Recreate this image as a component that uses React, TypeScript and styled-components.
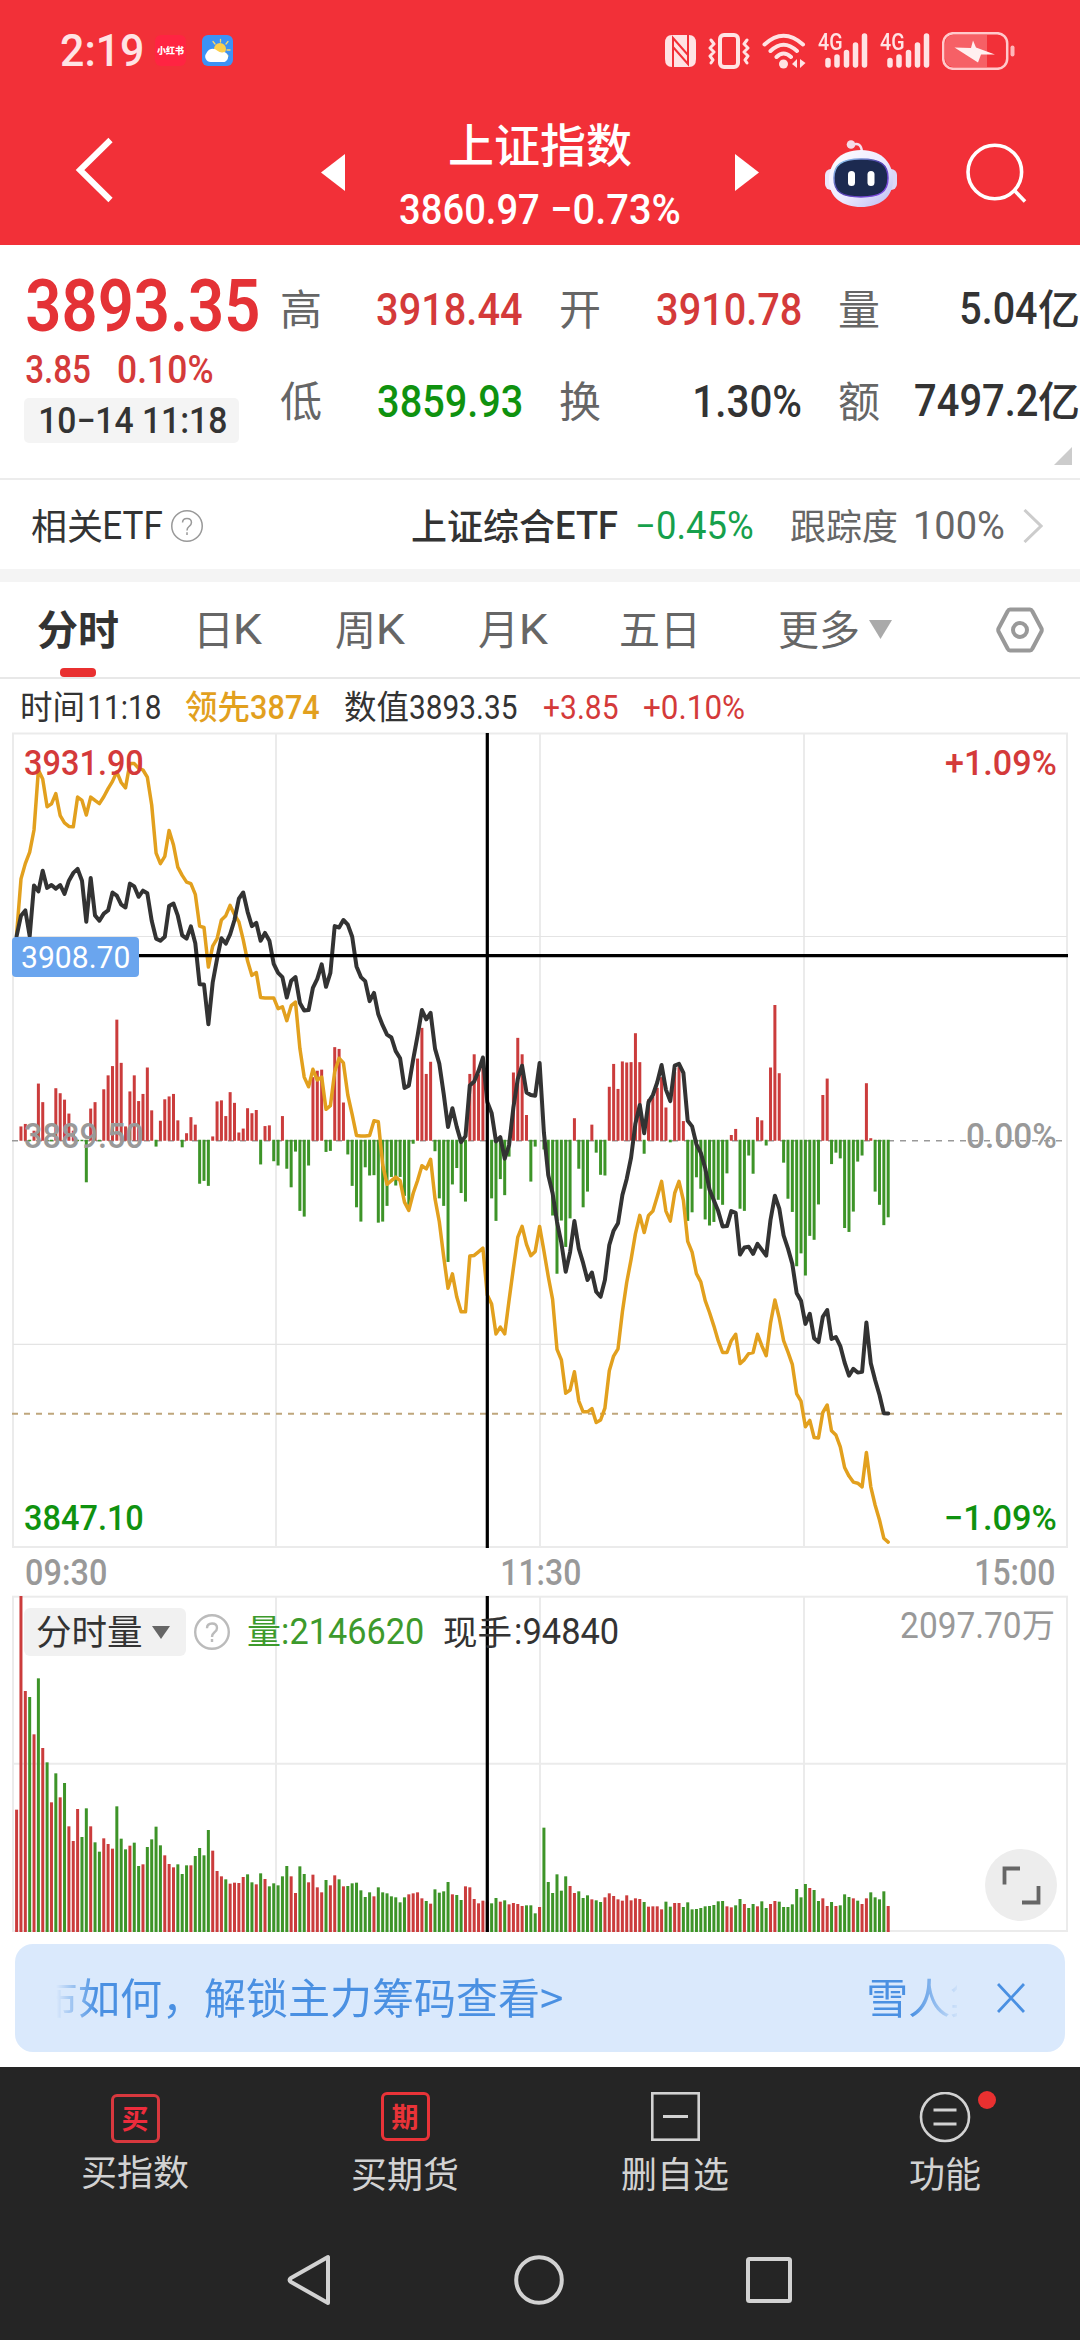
import React from "react";
import styled, { createGlobalStyle } from "styled-components";

const RED = "#e43236";
const GREEN = "#0f920f";
const INK = "#333333";
const GREY = "#999999";
const PALE = "#d2d2d2";
const ORANGE = "#e2a01e";

const GlobalStyle = createGlobalStyle`
  * { box-sizing: border-box; }
  body { margin: 0; background: #fff; font-family: "Noto Sans CJK SC", "Noto Sans", sans-serif; }
  svg { display: block; flex: none; }
`;

/* ---------- text primitives ---------- */

const FigureBox = styled.span<{ $w: number; $size: number; $ml?: number }>`
  display: block;
  flex: none;
  width: ${(p) => p.$w}px;
  height: ${(p) => p.$size}px;
  margin-left: ${(p) => p.$ml ?? 0}px;
`;

const FigureText = styled.span<{ $size: number; $weight: number; $color: string }>`
  display: inline-block;
  vertical-align: top;
  transform-origin: 0 50%;
  white-space: nowrap;
  font-family: Roboto, sans-serif;
  font-size: ${(p) => p.$size}px;
  font-weight: ${(p) => p.$weight};
  line-height: ${(p) => p.$size}px;
  color: ${(p) => p.$color};
`;

const measurer = document.createElement("canvas").getContext("2d")!;

type FigureProps = { t: string; w: number; size: number; weight?: number; color?: string; ml?: number };

/** Latin text and digits condensed so that their ink is exactly `w` wide. */
function Figure({ t, w, size, weight = 500, color = INK, ml }: FigureProps) {
  measurer.font = `${weight} ${size}px Roboto`;
  const m = measurer.measureText(t);
  const k = w / (m.actualBoundingBoxLeft + m.actualBoundingBoxRight);
  return (
    <FigureBox $w={w} $size={size} $ml={ml}>
      <FigureText
        $size={size}
        $weight={weight}
        $color={color}
        style={{ transform: `translateX(${m.actualBoundingBoxLeft * k}px) scaleX(${k})` }}
      >
        {t}
      </FigureText>
    </FigureBox>
  );
}

const Han = styled.span<{ $size: number; $color?: string; $weight?: number; $ml?: number }>`
  display: block;
  flex: none;
  margin-left: ${(p) => p.$ml ?? 0}px;
  padding-bottom: 0.11em;
  font-family: "Noto Sans CJK SC", sans-serif;
  font-size: ${(p) => p.$size}px;
  font-weight: ${(p) => p.$weight ?? 400};
  line-height: 1;
  white-space: nowrap;
  color: ${(p) => p.$color ?? INK};
`;

const Line = styled.div<{ $h?: number; $pl?: number; $pt?: number }>`
  display: flex;
  align-items: center;
  height: ${(p) => (p.$h ? `${p.$h}px` : "auto")};
  padding-left: ${(p) => p.$pl ?? 0}px;
  padding-top: ${(p) => p.$pt ?? 0}px;
`;

/* ---------- header ---------- */

const Screen = styled.div`
  width: 1080px;
  height: 2340px;
  overflow: hidden;
  display: flex;
  flex-direction: column;
  background: #fff;
`;

const Header = styled.header`
  height: 245px;
  background: #f23038;
`;

const StatusBar = styled.div`
  display: flex;
  align-items: center;
  height: 101px;
  padding: 0 65px 0 61px;
`;

const AppIcon = styled.div<{ $ml: number; $bg: string }>`
  display: flex;
  align-items: center;
  justify-content: center;
  width: 31px;
  height: 31px;
  margin-left: ${(p) => p.$ml}px;
  border-radius: 6px;
  background: ${(p) => p.$bg};
  color: #fff;
  font-size: 9px;
  font-weight: 900;
  line-height: 1;
  white-space: nowrap;
`;

const Spacer = styled.div`
  flex: 1;
`;

const StatusIcons = styled.div`
  display: flex;
  align-items: center;
  gap: 12px;
`;

const NavBar = styled.div`
  display: grid;
  grid-template-columns: 321px 438px 66px 72px 1fr;
  align-items: center;
  height: 144px;
`;

const TitleGroup = styled.div`
  display: flex;
  align-items: center;
  justify-content: space-between;
`;

const TitleStack = styled.div`
  display: flex;
  flex-direction: column;
  align-items: center;
  gap: 18px;
  padding-top: 4px;
`;

const SIGNAL = "#ffe3e4";

const NfcIcon = () => (
  <svg width="31" height="32" viewBox="0 0 31 32">
    <path d="M7 0H24Q31 0 31 8V24Q31 32 24 32H7Q0 32 0 24V8Q0 0 7 0Z" fill={SIGNAL} />
    <path d="M8 32V3L23 20V8M23 0V29L8 12V25" stroke="#f23038" strokeWidth="2" fill="none" />
  </svg>
);

const VibrateIcon = () => (
  <svg width="42" height="36" viewBox="0 0 42 36" fill="none" stroke={SIGNAL} strokeLinecap="round" strokeLinejoin="round">
    <rect x="12" y="2" width="18" height="32" rx="4" strokeWidth="4" />
    <path d="M3 7L6 11L2 15L6 19L2 23L5 27L3 30M39 7L36 11L40 15L36 19L40 23L37 27L39 30" strokeWidth="3" />
  </svg>
);

const WifiIcon = () => (
  <svg width="44" height="36" viewBox="0 0 44 36" fill="none" stroke={SIGNAL} strokeWidth="4" strokeLinecap="round">
    <path d="M2.500 11.500Q21.500 -6 41 11.500M8.500 18Q21.500 5.500 35 18M14.500 24Q21.500 17 29 24" />
    <circle cx="21.500" cy="31" r="4.500" fill={SIGNAL} stroke="none" />
    <path d="M35 26V35L30 31ZM38 26V35L43.500 30Z" fill={SIGNAL} stroke="none" />
  </svg>
);

const SignalBox = styled.div`
  position: relative;
  width: 50px;
  height: 35px;
`;

const SignalTag = styled.div`
  position: absolute;
  left: 0;
  top: -2px;
`;

const Signal = () => (
  <SignalBox>
    <svg width="50" height="35" viewBox="0 0 50 35" stroke={SIGNAL} strokeWidth="5.500" strokeLinecap="round">
      <path d="M10 27.500V32M19 24V32M28.500 19.500V32M37.500 12V32M46.500 3V32" />
    </svg>
    <SignalTag>
      <Figure t="4G" w={24} size={23} color={SIGNAL} />
    </SignalTag>
  </SignalBox>
);

const BatteryIcon = () => (
  <svg width="73" height="38" viewBox="0 0 73 38">
    <path d="M10 3H45V35H10Q3 33 3 26V12Q3 4 10 3Z" fill="#f66066" />
    <rect x="1.200" y="1.200" width="64" height="35.600" rx="10" fill="none" stroke="#ffc9cb" strokeWidth="2.500" />
    <rect x="68.500" y="13.500" width="4" height="11" rx="2" fill="#ffb6b9" />
    <path d="M31 8.500L34 15.500L53 22.500L39 22.500L36 30.500L12.500 15.500L29 16Z" fill="#fff0f0" />
  </svg>
);

const WeatherIcon = () => (
  <svg width="31" height="31" viewBox="0 0 31 31">
    <path d="M18.500 4.500V7M11 6.500L13 9M26 6.500L24 9M28 15H25M26 21L24 19" stroke="#f8d868" strokeWidth="1.300" strokeLinecap="round" />
    <circle cx="18" cy="14" r="6" fill="#fcd04e" />
    <path d="M9 27A5.500 5.500 0 0 1 4.500 18A6.500 6.500 0 0 1 15 15.500Q19 18.500 22 17A5 5 0 0 1 20 27Z" fill="#fff" />
  </svg>
);

const BackButton = styled.div`
  padding: 0 0 6px 74px;
`;

const BackIcon = () => (
  <BackButton>
    <svg width="40" height="68" viewBox="0 0 40 68">
      <path d="M36.500 4L6 34L36.500 64" fill="none" stroke="#fff" strokeWidth="6" />
    </svg>
  </BackButton>
);

const Arrow = ({ flip }: { flip?: boolean }) => (
  <svg width="24" height="37" viewBox="0 0 24 37">
    <path d={flip ? "M0 0L24 18.500L0 37Z" : "M24 0L0 18.500L24 37Z"} fill="#fff" />
  </svg>
);

const RobotIcon = () => (
  <svg width="72" height="67" viewBox="0 0 72 67">
    <defs>
      <linearGradient id="shell" x1="0" y1="0" x2="1" y2="1">
        <stop offset="0" stopColor="#ffffff" />
        <stop offset="0.550" stopColor="#ece9ff" />
        <stop offset="1" stopColor="#b9baf2" />
      </linearGradient>
      <linearGradient id="rim" x1="0" y1="0" x2="1" y2="1">
        <stop offset="0" stopColor="#9fe6ff" />
        <stop offset="0.450" stopColor="#4d3fa8" />
        <stop offset="1" stopColor="#8a4cf0" />
      </linearGradient>
    </defs>
    <path d="M27 5Q36 1 37 12" fill="none" stroke="#f6dfee" strokeWidth="2.500" />
    <circle cx="26" cy="4.500" r="4.300" fill="#f5dbe8" />
    <rect x="0" y="29" width="13" height="21" rx="6" fill="#ece6fa" />
    <rect x="59" y="29" width="13" height="21" rx="6" fill="#dcd6f8" />
    <path d="M36 10C58 10 68 24 68 40C68 58 54 67 36 67C18 67 4 58 4 40C4 24 14 10 36 10Z" fill="url(#shell)" />
    <path d="M36 19C56 19 63 25 63 38C63 52 55 57 36 57C17 57 9 52 9 38C9 25 16 19 36 19Z" fill="#1c2a50" stroke="url(#rim)" strokeWidth="1.500" />
    <rect x="23" y="31" width="7" height="15" rx="3.500" fill="#fff" />
    <rect x="42.500" y="31" width="7" height="15" rx="3.500" fill="#fff" />
  </svg>
);

const SearchButton = styled.div`
  padding-left: 68px;
`;

const SearchIcon = () => (
  <SearchButton>
    <svg width="62" height="62" viewBox="0 0 62 62" fill="none" stroke="#fff" strokeWidth="3.600">
      <circle cx="29.800" cy="30" r="26.800" />
      <path d="M48.500 47.500L60 59.500" />
    </svg>
  </SearchButton>
);

/* ---------- quote ---------- */

const Quote = styled.section`
  position: relative;
  display: flex;
  height: 235px;
  border-bottom: 2px solid #ececec;
`;

const PriceColumn = styled.div`
  width: 281px;
  padding: 24px 0 0 24px;
`;

const DateBadge = styled.div`
  display: flex;
  align-items: center;
  width: 215px;
  height: 45px;
  margin-top: 5px;
  padding-left: 16px;
  border-radius: 5px;
  background: #f4f4f4;
`;

const StatGrid = styled.div`
  display: grid;
  grid-template-columns: repeat(3, 242px);
  grid-template-rows: 92px 92px;
  column-gap: 37px;
  padding-top: 18px;
`;

const Stat = styled.div`
  display: flex;
  align-items: center;
  justify-content: space-between;
`;

const CornerMark = styled.div`
  position: absolute;
  right: 8px;
  top: 202px;
  border-left: 18px solid transparent;
  border-bottom: 18px solid #cccccc;
`;

const EtfRow = styled.section`
  display: flex;
  align-items: center;
  height: 89px;
  padding: 3px 37px 0 31px;
`;

const HelpIcon = styled.svg<{ $ml: number }>`
  margin-left: ${(p) => p.$ml}px;
`;

const Help = ({ r, stroke, color, ml }: { r: number; stroke: number; color: string; ml: number }) => (
  <HelpIcon $ml={ml} width={2 * r} height={2 * r} viewBox="0 0 36 36" fill="none" stroke={color} strokeWidth={stroke}>
    <circle cx="18" cy="18" r={18 - stroke / 2} />
    <path d="M13 14.200Q13 9.500 18 9.500T23 14Q23 16.500 20.500 18.300Q18 20.300 18 23M18 25V28" />
  </HelpIcon>
);

const More = styled.svg`
  margin-left: 19px;
`;

const Caret = styled.svg`
  margin-left: 9px;
`;

const Band = styled.div`
  height: 13px;
  background: #f4f4f4;
`;

/* ---------- tabs ---------- */

const Tabs = styled.nav`
  display: grid;
  grid-template-columns: 156px 142px 143px 141px 159px 218px 1fr;
  height: 97px;
  padding-left: 37px;
  border-bottom: 2px solid #e8e8e8;
`;

const Tab = styled.div`
  position: relative;
  display: flex;
  align-items: center;
`;

const Underline = styled.div`
  position: absolute;
  left: 23px;
  bottom: 0;
  width: 36px;
  height: 9px;
  border-radius: 4px;
  background: #e93030;
`;

const InfoRow = styled.div`
  display: flex;
  align-items: center;
  height: 53px;
  padding: 4px 0 0 20px;
`;

/* ---------- charts ---------- */

const Chart = styled.div<{ $h: number }>`
  position: relative;
  height: ${(p) => p.$h}px;
`;

const Pin = styled.div<{ $x: number; $y: number }>`
  position: absolute;
  display: flex;
  align-items: center;
  left: ${(p) => p.$x}px;
  top: ${(p) => p.$y}px;
`;

const PriceTag = styled.div`
  position: absolute;
  left: 12px;
  top: 205px;
  display: flex;
  align-items: center;
  width: 127px;
  height: 40px;
  padding-left: 10px;
  border-radius: 4px;
  background: #6aa5ee;
`;

const Axis = styled.div`
  display: flex;
  align-items: center;
  justify-content: space-between;
  height: 47px;
  padding: 2px 26px 0 26px;
`;

const Chip = styled.div`
  display: flex;
  align-items: center;
  width: 162px;
  height: 48px;
  padding-left: 12px;
  border-radius: 6px;
  background: #f1f1f1;
`;

const Expand = styled.div`
  position: absolute;
  left: 985px;
  top: 254px;
  width: 72px;
  height: 72px;
  border-radius: 50%;
  background: #ededed;
`;

const X0 = 16.6;
const STEP = 4.358;
const UNITS = 2.8;
const BASE = 1177;
const CROSS_X = 487.3;

const indexLine = [
  605, 548, 533, 605, 463, 480, 422, 470, 462, 472, 462, 487, 450, 428, 417, 450, 565, 442, 547, 562,
  542, 533, 483, 492, 517, 525, 458, 466, 495, 478, 485, 562, 612, 618, 607, 521, 514, 548, 603, 612,
  578, 625, 740, 741, 852, 735, 668, 611, 626, 600, 560, 500, 483, 537, 577, 568, 618, 596, 618, 683,
  708, 720, 777, 730, 720, 792, 813, 812, 750, 725, 684, 747, 708, 577, 581, 560, 573, 607, 690, 720,
  731, 787, 764, 824, 855, 881, 889, 927, 947, 1030, 1024, 950, 885, 812, 838, 820, 920, 962, 1047, 1140,
  1087, 1140, 1182, 1165, 1023, 1012, 983, 945, 1070, 1100, 1180, 1168, 1228, 1190, 1085, 1005, 968, 1043, 1050, 1052,
  960, 1155, 1275, 1325, 1405, 1465, 1545, 1490, 1403, 1480, 1520, 1568, 1547, 1601, 1615, 1568, 1470, 1430, 1409, 1330,
  1285, 1225, 1130, 1078, 1157, 1070, 1050, 1015, 966, 1035, 1067, 968, 963, 988, 1122, 1138, 1188, 1212, 1255, 1315,
  1345, 1375, 1418, 1417, 1375, 1380, 1497, 1477, 1475, 1495, 1467, 1483, 1500, 1400, 1332, 1368, 1443, 1480, 1523, 1605,
  1626, 1691, 1663, 1731, 1742, 1671, 1652, 1733, 1728, 1753, 1799, 1836, 1817, 1827, 1825, 1687, 1801, 1848, 1890, 1941,
  1942,
];

const leadLine = [
  600, 445, 402, 370, 308, 140, 165, 243, 235, 206, 268, 288, 298, 299, 216, 225, 266, 216, 225, 234,
  215, 192, 172, 145, 175, 190, 122, 122, 135, 140, 160, 238, 373, 402, 382, 309, 350, 412, 435, 454,
  458, 488, 577, 581, 692, 633, 612, 560, 548, 519, 545, 565, 615, 675, 715, 707, 777, 778, 778, 778,
  808, 803, 842, 800, 790, 920, 1000, 1027, 978, 1008, 1000, 1090, 1080, 985, 947, 960, 1050, 1105, 1163, 1165,
  1165, 1163, 1122, 1125, 1245, 1300, 1290, 1280, 1290, 1350, 1373, 1325, 1290, 1248, 1257, 1230, 1340, 1405, 1503, 1591,
  1551, 1616, 1657, 1657, 1501, 1499, 1489, 1479, 1610, 1635, 1719, 1700, 1719, 1624, 1535, 1448, 1418, 1468, 1500, 1488,
  1418, 1486, 1559, 1622, 1762, 1792, 1885, 1876, 1825, 1907, 1937, 1937, 1928, 1967, 1960, 1927, 1822, 1781, 1761, 1657,
  1575, 1510, 1439, 1387, 1435, 1387, 1375, 1335, 1292, 1375, 1403, 1325, 1292, 1345, 1460, 1490, 1550, 1573, 1626, 1659,
  1697, 1738, 1771, 1771, 1738, 1720, 1802, 1791, 1774, 1771, 1720, 1752, 1780, 1689, 1624, 1675, 1738, 1770, 1804, 1887,
  1907, 1979, 1961, 2009, 2010, 1939, 1918, 1990, 2002, 2035, 2093, 2117, 2134, 2137, 2147, 2051, 2147, 2198, 2240, 2291,
  2302,
];

const momentum = [
  1177, 1138, 1131, 1180, 1150, 1018, 1070, 1180, 1180, 1031, 1045, 1063, 1102, 1150, 1180, 1180, 1295, 1088, 1070, 1180,
  1034, 995, 969, 839, 960, 1138, 1040, 995, 1067, 1047, 973, 1093, 1195, 1122, 1062, 1054, 1047, 1121, 1197, 1157,
  1112, 1133, 1299, 1291, 1305, 1166, 1068, 1065, 1109, 1042, 1072, 1155, 1144, 1087, 1101, 1092, 1245, 1137, 1135, 1236,
  1248, 1109, 1257, 1309, 1209, 1375, 1391, 1248, 1000, 982, 979, 1210, 1207, 916, 921, 1071, 1217, 1305, 1365, 1405,
  1253, 1276, 1275, 1408, 1405, 1361, 1280, 1304, 1280, 1333, 1358, 1187, 948, 862, 991, 957, 1208, 1340, 1361, 1518,
  1301, 1255, 1325, 1349, 991, 936, 992, 970, 1177, 1340, 1403, 1286, 1331, 1223, 987, 890, 936, 1106, 1293, 1195,
  1177, 1203, 1275, 1388, 1551, 1402, 1476, 1396, 1115, 1257, 1365, 1321, 1133, 1212, 1274, 1276, 1027, 963, 1033, 956,
  959, 958, 877, 958, 1215, 1062, 1055, 1030, 1000, 1085, 1183, 985, 972, 1123, 1403, 1379, 1281, 1313, 1399, 1416,
  1406, 1344, 1358, 1270, 1162, 1145, 1369, 1375, 1220, 1271, 1112, 1121, 1192, 973, 798, 989, 1240, 1341, 1378, 1530,
  1494, 1556, 1445, 1456, 1357, 1050, 1004, 1244, 1212, 1228, 1423, 1434, 1377, 1237, 1220, 1017, 1171, 1321, 1358, 1415,
  1393,
];

const volumeTops = [
  689, 48, 333, 351, 463, 295, 504, 547, 667, 580, 652, 609, 739, 783, 687, 771, 685, 739, 787, 815,
  775, 792, 806, 679, 776, 808, 797, 788, 858, 853, 801, 778, 740, 796, 826, 852, 862, 853, 882, 856,
  856, 828, 804, 826, 750, 812, 873, 889, 898, 911, 908, 909, 891, 883, 907, 913, 880, 897, 919, 910,
  916, 889, 858, 889, 939, 859, 882, 907, 884, 922, 937, 900, 916, 886, 898, 919, 918, 910, 908, 931,
  951, 937, 949, 922, 937, 940, 949, 952, 967, 952, 943, 940, 937, 955, 963, 971, 928, 938, 934, 906,
  943, 945, 960, 919, 922, 957, 970, 962, 965, 970, 954, 965, 961, 973, 969, 972, 978, 976, 976, 1000,
  981, 743, 906, 939, 883, 932, 889, 918, 939, 934, 954, 946, 958, 961, 966, 952, 940, 948, 958, 962,
  946, 961, 955, 957, 966, 980, 979, 979, 988, 965, 980, 969, 969, 981, 967, 988, 987, 984, 979, 978,
  975, 964, 963, 979, 982, 976, 957, 972, 984, 972, 979, 964, 984, 972, 963, 965, 981, 981, 973, 927,
  952, 912, 924, 930, 963, 955, 978, 966, 978, 976, 943, 951, 955, 962, 972, 955, 937, 952, 958, 934,
  978,
];

/** r = the minute closed up, g = it closed down. */
const volumeSides =
  "rrrgrgrgrgrgrrrggrgg" +
  "rrrgggrggrggggrrrggg" +
  "rggggrrrgrrrrggrgrgg" +
  "gggrrggrrrrgrrgrgggg" +
  "ggrgggggggrrrrgrgggg" +
  "rggrrrrrrggrgrrrrggg" +
  "rggggggrrgggrggrrrrr" +
  "rrrrgrrrrggrrggggggg" +
  "gggrrggrggrggrrggggg" +
  "ggrggrrgrgggrgrrgggg" +
  "r";

const TOP = 732;
const yOf = (v: number) => 720 + v / UNITS - TOP;
const xOf = (i: number) => X0 + i * STEP;
const toPoints = (values: number[]) => values.map((v, i) => `${xOf(i).toFixed(1)},${yOf(v).toFixed(1)}`).join(" ");

function PriceChart() {
  const zero = yOf(BASE);
  return (
    <Chart $h={816}>
      <svg width="1080" height="816" viewBox="0 0 1080 816">
        <g stroke="#ebebeb" strokeWidth="2" fill="none">
          <rect x="13" y="1.500" width="1054" height="813.500" />
          <path d="M276 1V815M540 1V815M804 1V815" />
          <path d="M13 204.500H1067M13 612.300H1067" stroke="#e4e4e4" strokeWidth="1.200" />
        </g>
        <path d={`M12 ${zero + 0.4}H1062`} stroke={GREY} strokeWidth="1.600" strokeDasharray="6 6" />
        <path d="M12 681.700H1062" stroke="#bfa67c" strokeWidth="2" strokeDasharray="6 6" />
        {momentum.map((v, i) => {
          const y = yOf(v);
          const up = v < BASE;
          if (v === BASE) return null;
          return (
            <rect
              key={i}
              x={xOf(i) - 1.5}
              width="3"
              y={up ? y : zero - 0.6}
              height={Math.abs(y - zero) + 0.4}
              fill={up ? "#cb3c3c" : "#3d9428"}
            />
          );
        })}
        <polyline points={toPoints(leadLine)} fill="none" stroke={ORANGE} strokeWidth="3.500" strokeLinejoin="round" strokeLinecap="round" />
        <polyline points={toPoints(indexLine)} fill="none" stroke={INK} strokeWidth="4" strokeLinejoin="round" strokeLinecap="round" />
        <path d={`M12 223.700H1068M${CROSS_X} 1V816`} stroke="#000" strokeWidth="3.200" />
      </svg>
      <PriceTag>
        <Figure t="3908.70" w={107} size={31} weight={400} color="#fff" />
      </PriceTag>
      <Pin $x={25} $y={14}><Figure t="3931.90" w={118} size={35} color="#d43a3a" /></Pin>
      <Pin $x={25} $y={387}><Figure t="3889.50" w={118} size={35} color={GREY} /></Pin>
      <Pin $x={25} $y={769}><Figure t="3847.10" w={118} size={35} color={GREEN} /></Pin>
      <Pin $x={946} $y={14}><Figure t="+1.09%" w={110} size={35} color="#d43a3a" /></Pin>
      <Pin $x={967} $y={387}><Figure t="0.00%" w={89} size={35} color={GREY} /></Pin>
      <Pin $x={946} $y={769}><Figure t="−1.09%" w={110} size={35} color={GREEN} /></Pin>
    </Chart>
  );
}

function VolumeChart() {
  return (
    <Chart $h={337}>
      <svg width="1080" height="337" viewBox="0 0 1080 337">
        <g stroke="#ebebeb" strokeWidth="2" fill="none">
          <rect x="13" y="1.700" width="1054" height="334.300" />
          <path d="M276 1V336M540 1V336M804 1V336M13 168.700H1067" />
        </g>
        {volumeTops.map((v, i) => (
          <rect
            key={i}
            x={xOf(i) - 1.5}
            width="3"
            y={v / 3 - 15}
            height={352 - v / 3}
            fill={volumeSides[i] === "r" ? "#cb3c3c" : "#3d9428"}
          />
        ))}
        <path d={`M${CROSS_X} 1V337`} stroke="#000" strokeWidth="3.200" />
      </svg>
      <Pin $x={24} $y={13}>
        <Chip>
          <Han $size={35.5}>分时量</Han>
          <Caret width="18" height="13" viewBox="0 0 18 13">
            <path d="M0 0H18L9 13Z" fill="#666" />
          </Caret>
        </Chip>
        <Help r={18} stroke={2.4} color="#bbbbbb" ml={8} />
        <Han $size={34} $ml={17} $color="#3d9a2c">量</Han>
        <Figure t=":2146620" w={140} size={36} weight={400} color="#3d9a2c" ml={2} />
        <Han $size={34.5} $ml={20}>现手</Han>
        <Figure t=":94840" w={102} size={36} weight={400} ml={4} />
      </Pin>
      <Pin $x={901} $y={12}>
        <Figure t="2097.70" w={119} size={37} weight={400} color={GREY} />
        <Han $size={33} $ml={2} $color={GREY}>万</Han>
      </Pin>
      <Expand>
        <svg width="72" height="72" viewBox="0 0 72 72" fill="none" stroke="#666" strokeWidth="3.800">
          <path d="M35 19.500H19.500V35.500M37 53.500H53.500V37" />
        </svg>
      </Expand>
    </Chart>
  );
}

/* ---------- banner and bottom bars ---------- */

const Banner = styled.div`
  display: flex;
  align-items: center;
  height: 108px;
  margin: 12px 15px 15px;
  padding: 0 40px 0 41px;
  border-radius: 18px;
  background: #dae9fc;
`;

const Ticker = styled.div`
  display: flex;
  align-items: center;
  width: 901px;
  height: 60px;
  overflow: hidden;
  mask-image: linear-gradient(to right, transparent 0, #000 40px, #000 855px, transparent 905px);
`;

const BottomBar = styled.footer`
  display: flex;
  flex-direction: column;
  flex: 1;
  background: #252525;
`;

const Actions = styled.div`
  display: grid;
  grid-template-columns: repeat(4, 1fr);
  height: 153px;
  padding-top: 25px;
`;

const Action = styled.div<{ $gap: number }>`
  position: relative;
  display: flex;
  flex-direction: column;
  align-items: center;
  gap: ${(p) => p.$gap}px;
`;

const SealIcon = styled.div<{ $mt: number; $color: string }>`
  display: flex;
  align-items: center;
  justify-content: center;
  width: 49px;
  height: 49px;
  margin-top: ${(p) => p.$mt}px;
  border: 3px solid ${(p) => p.$color};
  border-radius: 6px;
`;

const Dot = styled.div`
  position: absolute;
  left: 168px;
  top: -1px;
  width: 18px;
  height: 18px;
  border-radius: 50%;
  background: #e93030;
`;

const SystemNav = styled.div`
  display: flex;
  align-items: center;
  justify-content: space-between;
  height: 120px;
  padding: 0 288px 0 286px;
`;

export default function App() {
  return (
    <>
      <GlobalStyle />
      <Screen>
        <Header>
          <StatusBar>
            <Figure t="2:19" w={81} size={45} color={SIGNAL} />
            <AppIcon $ml={13} $bg="#ff2442">小红书</AppIcon>
            <AppIcon $ml={16} $bg="#3c92f6"><WeatherIcon /></AppIcon>
            <Spacer />
            <StatusIcons>
              <NfcIcon />
              <VibrateIcon />
              <WifiIcon />
              <Signal />
              <Signal />
              <BatteryIcon />
            </StatusIcons>
          </StatusBar>
          <NavBar>
            <BackIcon />
            <TitleGroup>
              <Arrow />
              <TitleStack>
                <Han $size={46} $weight={500} $color="#fff">上证指数</Han>
                <Line>
                  <Figure t="3860.97" w={139} size={42} color="#fff" />
                  <Figure t="−0.73%" w={127} size={42} color="#fff" ml={14} />
                </Line>
              </TitleStack>
              <Arrow flip />
            </TitleGroup>
            <Spacer />
            <RobotIcon />
            <SearchIcon />
          </NavBar>
        </Header>

        <Quote>
          <PriceColumn>
            <Line $h={74} $pl={3}>
              <Figure t="3893.35" w={231} size={73} weight={600} color={RED} />
            </Line>
            <Line $h={50} $pl={2} $pt={5}>
              <Figure t="3.85" w={64} size={39} color="#d43a3a" />
              <Figure t="0.10%" w={94} size={39} color="#d43a3a" ml={28} />
            </Line>
            <DateBadge>
              <Figure t="10−14 11:18" w={186} size={36} />
            </DateBadge>
          </PriceColumn>
          <StatGrid>
            <Stat><Han $size={42} $color="#666">高</Han><Figure t="3918.44" w={145} size={45} color="#d43a3a" /></Stat>
            <Stat><Han $size={42} $color="#666">开</Han><Figure t="3910.78" w={144} size={45} color="#d43a3a" /></Stat>
            <Stat>
              <Han $size={42} $color="#666">量</Han>
              <Line><Figure t="5.04" w={76} size={45} /><Han $size={42} $weight={500} $ml={1}>亿</Han></Line>
            </Stat>
            <Stat><Han $size={42} $color="#666">低</Han><Figure t="3859.93" w={144} size={45} color={GREEN} /></Stat>
            <Stat><Han $size={42} $color="#666">换</Han><Figure t="1.30%" w={106} size={45} /></Stat>
            <Stat>
              <Han $size={42} $color="#666">额</Han>
              <Line><Figure t="7497.2" w={122} size={45} /><Han $size={42} $weight={500} $ml={1}>亿</Han></Line>
            </Stat>
          </StatGrid>
          <CornerMark />
        </Quote>

        <EtfRow>
          <Han $size={36}>相关</Han>
          <Figure t="ETF" w={57} size={38} weight={400} ml={2} />
          <Help r={16} stroke={1.7} color={GREY} ml={9} />
          <Spacer />
          <Han $size={36} $weight={500}>上证综合</Han>
          <Figure t="ETF" w={60} size={38} ml={2} />
          <Figure t="−0.45%" w={115} size={38} weight={400} color="#16a04c" ml={21} />
          <Han $size={36} $color="#666" $ml={37}>跟踪度</Han>
          <Figure t="100%" w={88} size={38} weight={400} color="#666" ml={18} />
          <More width="20" height="34" viewBox="0 0 20 34">
            <path d="M1.500 1L18 17L1.500 33" fill="none" stroke="#cccccc" strokeWidth="3" />
          </More>
        </EtfRow>
        <Band />

        <Tabs>
          <Tab><Han $size={41} $weight={700}>分时</Han><Underline /></Tab>
          <Tab><Han $size={41} $color="#666">日</Han><Figure t="K" w={26} size={43} weight={400} color="#666" ml={2} /></Tab>
          <Tab><Han $size={41} $color="#666">周</Han><Figure t="K" w={26} size={43} weight={400} color="#666" ml={3} /></Tab>
          <Tab><Han $size={41} $color="#666">月</Han><Figure t="K" w={26} size={43} weight={400} color="#666" ml={3} /></Tab>
          <Tab><Han $size={41} $color="#666">五日</Han></Tab>
          <Tab>
            <Han $size={41} $color="#666">更多</Han>
            <Caret width="23" height="19" viewBox="0 0 23 19">
              <path d="M0 0H23L11.500 19Z" fill="#aaaaaa" />
            </Caret>
          </Tab>
          <Tab>
            <svg width="48" height="46" viewBox="0 0 48 46" fill="none" stroke={GREY} strokeWidth="4">
              <path d="M14 2.500H34Q35.500 2.500 36.200 4L45.500 21.500Q46 23 45.500 24.500L36.200 42Q35.500 43.500 34 43.500H14Q12.500 43.500 11.800 42L2.500 24.500Q2 23 2.500 21.500L11.800 4Q12.500 2.500 14 2.500Z" />
              <circle cx="24" cy="23" r="7" />
            </svg>
          </Tab>
        </Tabs>

        <InfoRow>
          <Han $size={32.5}>时间</Han>
          <Figure t="11:18" w={71} size={33} weight={400} ml={4} />
          <Han $size={32.5} $color={ORANGE} $weight={500} $ml={25}>领先</Han>
          <Figure t="3874" w={68} size={33} color={ORANGE} ml={1} />
          <Han $size={32.5} $ml={25}>数值</Han>
          <Figure t="3893.35" w={107} size={33} weight={400} ml={1} />
          <Figure t="+3.85" w={74} size={33} weight={400} color="#d43a3a" ml={27} />
          <Figure t="+0.10%" w={100} size={33} weight={400} color="#d43a3a" ml={26} />
        </InfoRow>

        <PriceChart />
        <Axis>
          <Figure t="09:30" w={80} size={36} color={GREY} />
          <Figure t="11:30" w={78} size={36} color={GREY} />
          <Figure t="15:00" w={78} size={36} color={GREY} />
        </Axis>
        <VolumeChart />

        <Banner>
          <Ticker>
            <Han $size={42} $color="#4a90e2" $ml={-20}>布如何，解锁主力筹码查看&gt;</Han>
            <Han $size={42} $color="#4a90e2" $ml={303}>雪人集</Han>
          </Ticker>
          <Spacer />
          <svg width="28" height="30" viewBox="0 0 28 30">
            <path d="M1 1L27 29M27 1L1 29" stroke="#4a90e2" strokeWidth="2.800" />
          </svg>
        </Banner>

        <BottomBar>
          <Actions>
            <Action $gap={9}>
              <SealIcon $mt={2} $color="#d8383e"><Han $size={27} $weight={700} $color="#ee2c3c">买</Han></SealIcon>
              <Han $size={36} $color={PALE}>买指数</Han>
            </Action>
            <Action $gap={13}>
              <SealIcon $mt={0} $color="#e93338"><Han $size={27} $weight={700} $color="#e93338">期</Han></SealIcon>
              <Han $size={36} $color={PALE}>买期货</Han>
            </Action>
            <Action $gap={13}>
              <svg width="49" height="49" viewBox="0 0 49 49" fill="none" stroke={PALE} strokeWidth="2.600">
                <rect x="1.300" y="1.300" width="46.400" height="46.400" />
                <path d="M12 24.500H37" strokeWidth="3" />
              </svg>
              <Han $size={36} $color={PALE}>删自选</Han>
            </Action>
            <Action $gap={10}>
              <svg width="52" height="52" viewBox="0 0 52 52" fill="none" stroke={PALE} strokeWidth="2.600">
                <circle cx="26" cy="25" r="24" />
                <path d="M14.500 18H37.500M14.500 32H37.500" strokeWidth="3" />
              </svg>
              <Han $size={36} $color={PALE}>功能</Han>
              <Dot />
            </Action>
          </Actions>
          <SystemNav>
            <svg width="46" height="52" viewBox="0 0 46 52">
              <path d="M42 3V49L5 28Q2 26 5 24Z" fill="none" stroke={PALE} strokeWidth="4" strokeLinejoin="round" />
            </svg>
            <svg width="50" height="50" viewBox="0 0 50 50">
              <circle cx="25" cy="25" r="22.800" fill="none" stroke={PALE} strokeWidth="4" />
            </svg>
            <svg width="46" height="46" viewBox="0 0 46 46">
              <rect x="2" y="2" width="42" height="42" rx="1.500" fill="none" stroke={PALE} strokeWidth="4" />
            </svg>
          </SystemNav>
        </BottomBar>
      </Screen>
    </>
  );
}
